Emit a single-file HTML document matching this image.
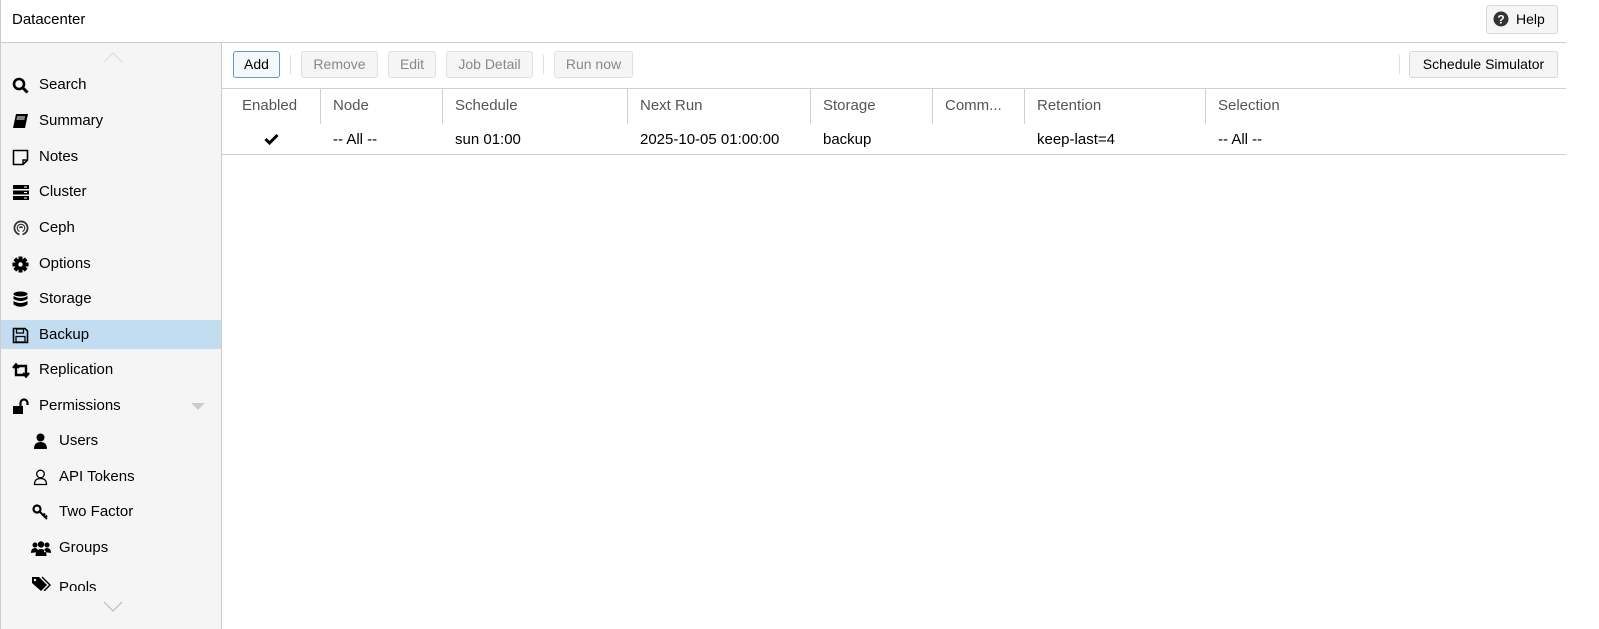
<!DOCTYPE html>
<html><head><style>
*{margin:0;padding:0;box-sizing:border-box}
body{width:1599px;height:629px;background:#fff;font-family:"Liberation Sans",sans-serif;font-size:15px;color:#000;position:relative;overflow:hidden}
.a{position:absolute}
.btn{position:absolute;top:51px;height:27px;border:1px solid #e0e0e0;background:#f5f5f5;border-radius:3px;color:#888;font-size:14px;line-height:25px;text-align:center}
.sep{position:absolute;top:55px;width:1px;height:19px;background:#e0e0e0}
.nav{position:absolute;left:0;width:221px;height:30px;line-height:30px;font-size:15px}
.nav svg{position:absolute;top:7px}
.th{position:absolute;top:88px;height:36px;line-height:35px;color:#555;font-size:15px;border-right:1px solid #d0d0d0;padding-left:12px}
.td{position:absolute;top:125px;height:29px;line-height:29px;font-size:15px;padding-left:12px}
</style></head><body>
<div class="a" style="left:0;top:0;width:1566px;height:43px;border-left:1px solid #ccc;border-bottom:1px solid #ccc"></div>
<div class="a" style="left:12px;top:11px;font-size:15px">Datacenter</div>
<div class="a" style="left:1486px;top:5px;width:72px;height:29px;border:1px solid #d8d8d8;background:#f5f5f5;border-radius:3px;line-height:27px;font-size:14px;padding-left:29px">Help</div>
<svg class="a" style="left:1493px;top:11px" width="16" height="16" viewBox="0 0 16 16"><circle cx="8" cy="8" r="7.5" fill="#333"/><text x="8" y="12.5" font-size="12" font-weight="bold" text-anchor="middle" fill="#fff" font-family="Liberation Sans">?</text></svg>

<div class="a" style="left:0;top:43px;width:222px;height:586px;background:#f5f5f5;border-left:1px solid #ccc;border-right:1px solid #ccc"></div>
<svg class="a" style="left:103px;top:52px" width="20" height="11"><path d="M1 10L10 1L19 10" stroke="#ddd" fill="none" stroke-width="1.2"/></svg>
<svg class="a" style="left:103px;top:601px" width="20" height="11"><path d="M1 1L10 10L19 1" stroke="#bbb" fill="none" stroke-width="1.2"/></svg>

<div class="nav" style="top:70px"><svg style="left:12px" width="17" height="17"><circle cx="7" cy="7" r="5" stroke="#000" stroke-width="2.6" fill="none"/><path d="M10.5 10.5L15.5 15.5" stroke="#000" stroke-width="3"/></svg><span style="position:absolute;left:39px">Search</span></div>
<div class="nav" style="top:106px"><svg style="left:12px" width="17" height="17"><path d="M4 1H16L13 15H1Z" fill="#000"/><path d="M5 4H13M4.5 6H12.5" stroke="#fff"/></svg><span style="position:absolute;left:39px">Summary</span></div>
<div class="nav" style="top:142px"><svg style="left:12px" width="17" height="17"><path d="M1.5 1.5H15.5V11L11 15.5H1.5Z" stroke="#000" stroke-width="1.6" fill="none"/><path d="M11 15.5V11H15.5" stroke="#000" stroke-width="1.4" fill="none"/></svg><span style="position:absolute;left:39px">Notes</span></div>
<div class="nav" style="top:177px"><svg style="left:12px" width="18" height="17"><rect x="1" y="1" width="16" height="4" fill="#000"/><rect x="1" y="6.5" width="16" height="4" fill="#000"/><rect x="1" y="12" width="16" height="4" fill="#000"/><path d="M12 3H15M12 8.5H15M12 14H15" stroke="#fff"/></svg><span style="position:absolute;left:39px">Cluster</span></div>
<div class="nav" style="top:213px"><svg style="left:12px" width="18" height="17"><circle cx="9" cy="8" r="7.5" fill="#333"/><circle cx="9" cy="8" r="5" fill="none" stroke="#fff" stroke-width="1.3"/><circle cx="9" cy="8" r="2.5" fill="none" stroke="#fff" stroke-width="1.3"/><rect x="7.5" y="8" width="3" height="9" fill="#f5f5f5"/></svg><span style="position:absolute;left:39px">Ceph</span></div>
<div class="nav" style="top:249px"><svg style="left:12px" width="17" height="17" viewBox="0 0 17 17"><g fill="#000" transform="translate(8.5 8.5)"><rect x="-2" y="-8" width="4" height="16"/><rect x="-2" y="-8" width="4" height="16" transform="rotate(45)"/><rect x="-2" y="-8" width="4" height="16" transform="rotate(90)"/><rect x="-2" y="-8" width="4" height="16" transform="rotate(135)"/><circle r="5.5"/><circle r="2.2" fill="#f5f5f5"/></g></svg><span style="position:absolute;left:39px">Options</span></div>
<div class="nav" style="top:284px"><svg style="left:12px" width="17" height="17"><ellipse cx="8.5" cy="3" rx="7" ry="2.5" fill="#000"/><path d="M1.5 5Q8.5 9 15.5 5V8Q8.5 12 1.5 8Z M1.5 10Q8.5 14 15.5 10V13.5Q8.5 18 1.5 13.5Z" fill="#000"/></svg><span style="position:absolute;left:39px">Storage</span></div>
<div class="nav" style="top:320px;background:#c2ddf2;left:1px;width:220px;height:29px"><svg style="left:11px" width="17" height="17"><path d="M1.5 1.5H13L15.5 4V15.5H1.5Z" stroke="#000" stroke-width="1.6" fill="none"/><rect x="4.5" y="2" width="7" height="4" stroke="#000" stroke-width="1.3" fill="none"/><rect x="4" y="9.5" width="9" height="5.5" stroke="#000" stroke-width="1.3" fill="none"/></svg><span style="position:absolute;left:38px">Backup</span></div>
<div class="nav" style="top:355px"><svg style="left:12px" width="18" height="17"><path d="M4 3V13H12M1 6L4 2.5L7 6" stroke="#000" stroke-width="2.4" fill="none"/><path d="M14 14V4H6M11 11L14 14.5L17 11" stroke="#000" stroke-width="2.4" fill="none"/></svg><span style="position:absolute;left:39px">Replication</span></div>
<div class="nav" style="top:391px"><svg style="left:12px" width="17" height="17"><rect x="1" y="8" width="10" height="8" fill="#000"/><path d="M8.5 8V5A3.5 3.5 0 0 1 15.5 5V7" stroke="#000" stroke-width="2.2" fill="none"/></svg><span style="position:absolute;left:39px">Permissions</span><svg style="left:191px;top:12px" width="14" height="8"><path d="M0 0H14L7 7Z" fill="#ccc"/></svg></div>
<div class="nav" style="top:426px"><svg style="left:33px" width="15" height="17"><circle cx="7.5" cy="4.5" r="4" fill="#000"/><path d="M1 16Q1 9 7.5 9Q14 9 14 16Z" fill="#000"/></svg><span style="position:absolute;left:59px">Users</span></div>
<div class="nav" style="top:462px"><svg style="left:33px" width="15" height="17"><circle cx="7.5" cy="5" r="3.8" fill="none" stroke="#000" stroke-width="1.3"/><path d="M1.5 15.5Q1.5 9.5 7.5 9.5Q13.5 9.5 13.5 15.5Z" fill="none" stroke="#000" stroke-width="1.3"/></svg><span style="position:absolute;left:59px">API Tokens</span></div>
<div class="nav" style="top:497px"><svg style="left:32px" width="17" height="17"><circle cx="5" cy="5" r="3.5" fill="none" stroke="#000" stroke-width="2.2"/><path d="M7.5 7.5L15 15M11 11.5L13 9.5M13 13.5L15 11.5" stroke="#000" stroke-width="2"/></svg><span style="position:absolute;left:59px">Two Factor</span></div>
<div class="nav" style="top:533px"><svg style="left:31px" width="20" height="17"><circle cx="4" cy="5" r="2.5" fill="#000"/><circle cx="16" cy="5" r="2.5" fill="#000"/><circle cx="10" cy="4.5" r="3.2" fill="#000"/><path d="M0 13Q0 8 4 8Q7 8 7 12Z M20 13Q20 8 16 8Q13 8 13 12Z M4.5 16Q4.5 9 10 9Q15.5 9 15.5 16Z" fill="#000"/></svg><span style="position:absolute;left:59px">Groups</span></div>
<div style="position:absolute;left:0;top:568px;width:221px;height:23px;overflow:hidden"><div class="nav" style="top:0"><svg style="left:31px;top:8px" width="20" height="17"><path d="M1 1H8L16 9L10 15L1 7Z" fill="#000"/><path d="M11 1L19 9L13 15" stroke="#000" stroke-width="1.5" fill="none"/><circle cx="4" cy="4" r="1.2" fill="#f5f5f5"/></svg><span style="position:absolute;left:59px;top:5px">Pools</span></div></div>

<div class="a" style="left:222px;top:88px;width:1344px;height:1px;background:#d0d0d0"></div>
<div class="btn" style="left:233px;width:47px;border-color:#5c9ad0;background:#f5f8fb;color:#000">Add</div>
<div class="sep" style="left:290px"></div>
<div class="btn" style="left:301px;width:77px">Remove</div>
<div class="btn" style="left:388px;width:48px">Edit</div>
<div class="btn" style="left:446px;width:87px">Job Detail</div>
<div class="sep" style="left:543px"></div>
<div class="btn" style="left:554px;width:79px">Run now</div>
<div class="sep" style="left:1399px"></div>
<div class="btn" style="left:1409px;width:149px;color:#000;border-color:#d8d8d8">Schedule Simulator</div>

<div class="th" style="left:222px;width:99px;padding-left:20px">Enabled</div>
<div class="th" style="left:321px;width:122px">Node</div>
<div class="th" style="left:443px;width:185px">Schedule</div>
<div class="th" style="left:628px;width:183px">Next Run</div>
<div class="th" style="left:811px;width:122px">Storage</div>
<div class="th" style="left:933px;width:92px">Comm...</div>
<div class="th" style="left:1025px;width:181px">Retention</div>
<div class="th" style="left:1206px;width:200px;border-right:none">Selection</div>

<svg class="a" style="left:264px;top:133px" width="15" height="12"><path d="M1.5 6L5.5 10L13.5 2" stroke="#000" stroke-width="3" fill="none"/></svg>
<div class="td" style="left:321px">-- All --</div>
<div class="td" style="left:443px">sun 01:00</div>
<div class="td" style="left:628px">2025-10-05 01:00:00</div>
<div class="td" style="left:811px">backup</div>
<div class="td" style="left:1025px">keep-last=4</div>
<div class="td" style="left:1206px">-- All --</div>
<div class="a" style="left:222px;top:154px;width:1344px;height:1px;background:#d0d0d0"></div>
</body></html>
